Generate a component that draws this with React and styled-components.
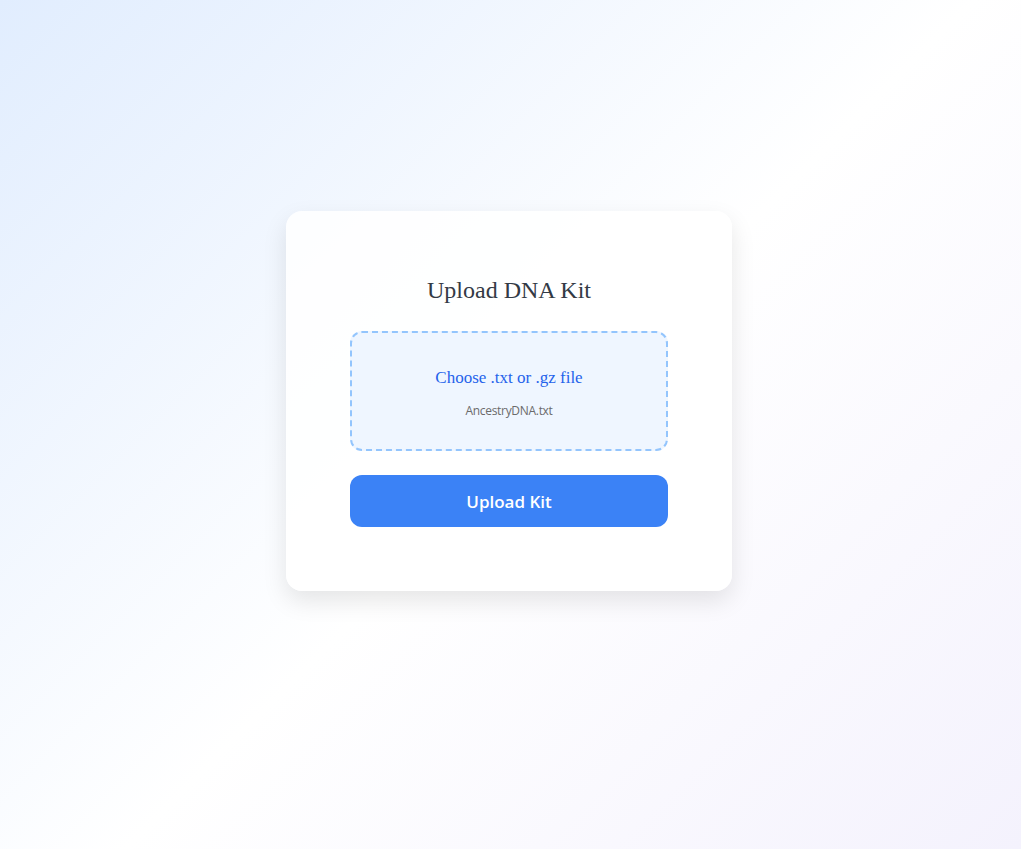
import React from 'react';
import styled, { createGlobalStyle } from 'styled-components';

const GlobalStyle = createGlobalStyle`
  * {
    box-sizing: border-box;
  }
  html,
  body {
    margin: 0;
    padding: 0;
  }
  body {
    font-family: 'Open Sans', 'Noto Sans', sans-serif;
  }
`;

const Page = styled.div`
  min-height: 100vh;
  display: flex;
  align-items: center;
  justify-content: center;
  background: linear-gradient(135deg, #e1edfe 0%, #ffffff 52%, #f4f2fd 100%);
  padding: 0 3px 47px 0;
`;

const Card = styled.div`
  width: 446px;
  padding: 64px;
  background: rgba(255, 255, 255, 0.85);
  border-radius: 16px;
  box-shadow: 0 10px 25px rgba(0, 0, 0, 0.1);
  display: flex;
  flex-direction: column;
`;

const Title = styled.h2`
  margin: 0 0 26px;
  padding-top: 1px;
  font-family: Georgia, 'Liberation Serif', serif;
  font-weight: 400;
  font-size: 24px;
  line-height: 29px;
  color: #333a45;
  text-align: center;
`;

const DropZone = styled.label`
  display: flex;
  flex-direction: column;
  align-items: center;
  padding: 33px 16px 30px;
  border: 2px dashed #93c5fd;
  border-radius: 12px;
  background: #eff6ff;
  cursor: pointer;
`;

const HiddenInput = styled.input`
  display: none;
`;

const ChooseText = styled.span`
  font-family: Georgia, 'Liberation Serif', serif;
  font-size: 17px;
  line-height: 24px;
  color: #2563eb;
`;

const FileName = styled.span`
  margin-top: 13px;
  font-family: 'Open Sans', 'Noto Sans', sans-serif;
  font-size: 12px;
  line-height: 16px;
  color: #6b6b6b;
  letter-spacing: -0.3px;
`;

const UploadButton = styled.button`
  margin-top: 24px;
  height: 52px;
  border: none;
  border-radius: 12px;
  background: #3b82f6;
  color: #ffffff;
  font-family: 'Open Sans', 'Noto Sans', sans-serif;
  font-size: 17px;
  font-weight: 600;
  cursor: pointer;
`;

export default function App() {
  return (
    <>
      <GlobalStyle />
      <Page>
        <Card>
          <Title>Upload DNA Kit</Title>
          <DropZone>
            <HiddenInput type="file" accept=".txt,.gz" />
            <ChooseText>Choose .txt or .gz file</ChooseText>
            <FileName>AncestryDNA.txt</FileName>
          </DropZone>
          <UploadButton>Upload Kit</UploadButton>
        </Card>
      </Page>
    </>
  );
}
